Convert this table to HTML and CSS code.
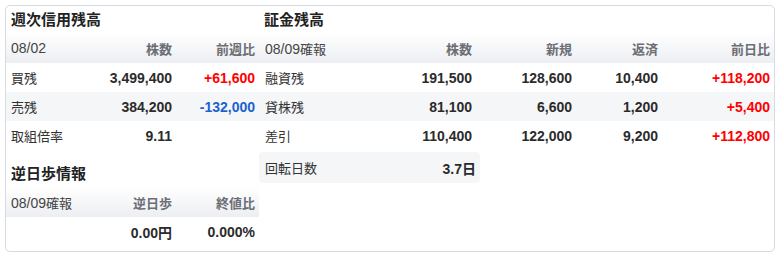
FILE: index.html
```html
<!DOCTYPE html>
<html lang="ja">
<head>
<meta charset="utf-8">
<link rel="stylesheet" href="styles.css">
</head>
<body>
<div class="card">
  <section class="col col-left">
    <h2 class="title">週次信用残高</h2>
    <table class="tbl tbl-left">
      <colgroup><col class="l1"><col class="l2"><col class="l3"></colgroup>
      <thead>
        <tr><th class="lbl"><span class="lat">08/02</span></th><th>株数</th><th>前週比</th></tr>
      </thead>
      <tbody>
        <tr><td class="lbl">買残</td><td class="num">3,499,400</td><td class="num up">+61,600</td></tr>
        <tr class="alt"><td class="lbl">売残</td><td class="num">384,200</td><td class="num down">-132,000</td></tr>
        <tr><td class="lbl">取組倍率</td><td class="num">9.11</td><td></td></tr>
      </tbody>
    </table>
    <h2 class="title title-second">逆日歩情報</h2>
    <table class="tbl tbl-left">
      <colgroup><col class="l1"><col class="l2"><col class="l3"></colgroup>
      <thead>
        <tr><th class="lbl"><span class="lat">08/09</span>確報</th><th>逆日歩</th><th>終値比</th></tr>
      </thead>
      <tbody>
        <tr><td class="lbl"></td><td class="num">0.00<span class="cjk">円</span></td><td class="num">0.000%</td></tr>
      </tbody>
    </table>
  </section>
  <section class="col col-right">
    <h2 class="title">証金残高</h2>
    <table class="tbl tbl-right">
      <colgroup><col class="r1"><col class="r2"><col class="r3"><col class="r4"><col class="r5"></colgroup>
      <thead>
        <tr><th class="lbl"><span class="lat">08/09</span>確報</th><th>株数</th><th>新規</th><th>返済</th><th>前日比</th></tr>
      </thead>
      <tbody>
        <tr><td class="lbl">融資残</td><td class="num">191,500</td><td class="num">128,600</td><td class="num">10,400</td><td class="num up">+118,200</td></tr>
        <tr class="alt"><td class="lbl">貸株残</td><td class="num">81,100</td><td class="num">6,600</td><td class="num">1,200</td><td class="num up">+5,400</td></tr>
        <tr><td class="lbl">差引</td><td class="num">110,400</td><td class="num">122,000</td><td class="num">9,200</td><td class="num up">+112,800</td></tr>
      </tbody>
    </table>
    <table class="tbl tbl-turn">
      <colgroup><col class="r1"><col class="r2"></colgroup>
      <tbody>
        <tr class="alt"><td class="lbl">回転日数</td><td class="num">3.7<span class="cjk">日</span></td></tr>
      </tbody>
    </table>
  </section>
</div>
</body>
</html>
```

FILE: styles.css
```css
html, body {
  margin: 0;
  padding: 0;
  background: #ffffff;
}
body {
  padding: 5px;
  font-family: "Liberation Sans", Arial, "Noto Sans CJK JP", sans-serif;
  font-size: 13px;
  color: #333333;
}
.card {
  box-sizing: border-box;
  width: 770px;
  height: 247px;
  border: 1px solid #d6dae1;
  border-radius: 5px;
  display: flex;
  overflow: hidden;
}
.col-left {
  width: 253px;
  flex: none;
}
.col-right {
  width: 515px;
  flex: none;
}
.title {
  margin: 0;
  height: 27px;
  line-height: 27px;
  padding-left: 5px;
  font-size: 15px;
  font-weight: bold;
  color: #222222;
}
.title-second {
  margin-top: 10px;
}
.tbl {
  border-collapse: collapse;
  table-layout: fixed;
}
.tbl-left { width: 253px; }
.tbl-right { width: 515px; }
.tbl-turn {
  width: 221px;
  margin-top: 2px;
}
.tbl-turn tr.alt td:first-child { border-radius: 4px 0 0 4px; }
.tbl-turn tr.alt td:last-child { border-radius: 0 4px 4px 0; }
col.l1 { width: 91px; }
col.l2 { width: 79px; }
col.l3 { width: 83px; }
col.r1 { width: 111px; }
col.r2 { width: 106px; }
col.r3 { width: 100px; }
col.r4 { width: 86px; }
col.r5 { width: 112px; }
thead tr {
  background: linear-gradient(#ffffff, #eceef2);
}
th {
  height: 30px;
  padding: 0 4px 0 5px;
  text-align: right;
  font-weight: bold;
  color: #6b6e74;
  font-size: 13px;
}
th.lbl {
  text-align: left;
  font-weight: normal;
  color: #444444;
}
.lat {
  font-size: 14px;
}
.cjk {
  font-size: 14px;
}
td {
  height: 29px;
  padding: 0 4px 0 5px;
  white-space: nowrap;
}
td.lbl {
  text-align: left;
  color: #333333;
}
.col-right td.lbl,
.col-right th.lbl {
  padding-left: 6px;
}
td.num {
  text-align: right;
  font-weight: bold;
  font-size: 14px;
  color: #2b2b2b;
}
td.up { color: #ff0000; }
td.down { color: #1a62d0; }
tr.alt td {
  background: #f5f6f8;
}
.tbl-turn td {
  height: 31px;
}
```
